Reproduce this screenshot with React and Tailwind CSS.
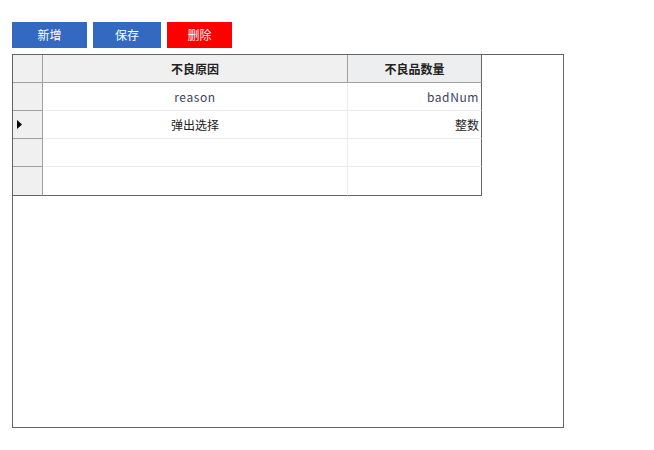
const rows = [
    { reason: 'reason', num: 'badNum', latin: true },
    { reason: '弹出选择', num: '整数', current: true },
    { reason: '', num: '' },
    { reason: '', num: '', last: true },
];

function Arrow() {
    return (
        <svg width="6" height="9" viewBox="0 0 6 9" className="block">
            <polygon points="0,0 5,4.5 0,9" fill="#000" />
        </svg>
    );
}

export default function App() {
    return (
        <div
            className="min-h-[450px] w-[654px] bg-white pl-[12px] pt-[22px] text-[12px] text-[#222]"
            style={{ fontFamily: '"Noto Sans CJK SC", "Noto Sans", sans-serif' }}
        >
            <div className="flex gap-[6px]">
                <button className="h-[26px] w-[75px] bg-[#3469c1] text-white leading-none">新增</button>
                <button className="h-[26px] w-[68px] bg-[#3469c1] text-white leading-none">保存</button>
                <button className="h-[26px] w-[65px] bg-[#ff0000] text-white leading-none">删除</button>
            </div>

            <div className="mt-[6px] h-[374px] w-[552px] border border-[#646464]">
                <div className="grid w-[469px] grid-cols-[30px_305px_134px]">
                    {/* header */}
                    <div className="h-[28px] border-r border-b border-[#a0a0a0] bg-[#f0f0f0]" />
                    <div className="flex h-[28px] items-center justify-center border-r border-b border-[#a0a0a0] bg-[#f0f0f0] font-bold">
                        不良原因
                    </div>
                    <div className="flex h-[28px] items-center justify-center border-r border-b border-r-[#646464] border-b-[#a0a0a0] bg-[#edeef0] font-bold">
                        不良品数量
                    </div>

                    {rows.map((r, i) => (
                        <div key={i} className="contents">
                            <div
                                className={`flex items-center border-r border-r-[#a0a0a0] bg-[#f0f0f0] pl-[4px] ${
                                    r.last ? 'h-[29px] border-b border-b-[#646464]' : 'h-[28px] border-b border-b-[#a0a0a0]'
                                }`}
                            >
                                {r.current && <Arrow />}
                            </div>
                            <div
                                className={`flex items-center justify-center border-r border-r-[#ececec] ${
                                    r.last ? 'h-[29px] border-b border-b-[#646464]' : 'h-[28px] border-b border-b-[#ececec]'
                                } ${r.latin ? 'tracking-[0.6px] text-[#3c3f5e]' : ''}`}
                            >
                                {r.reason}
                            </div>
                            <div
                                className={`flex items-center justify-end border-r border-r-[#646464] pr-[2px] ${
                                    r.last ? 'h-[29px] border-b border-b-[#646464]' : 'h-[28px] border-b border-b-[#ececec]'
                                } ${r.latin ? 'tracking-[0.6px] text-[#3c3f5e]' : ''}`}
                            >
                                {r.num}
                            </div>
                        </div>
                    ))}
                </div>
            </div>
        </div>
    );
}
